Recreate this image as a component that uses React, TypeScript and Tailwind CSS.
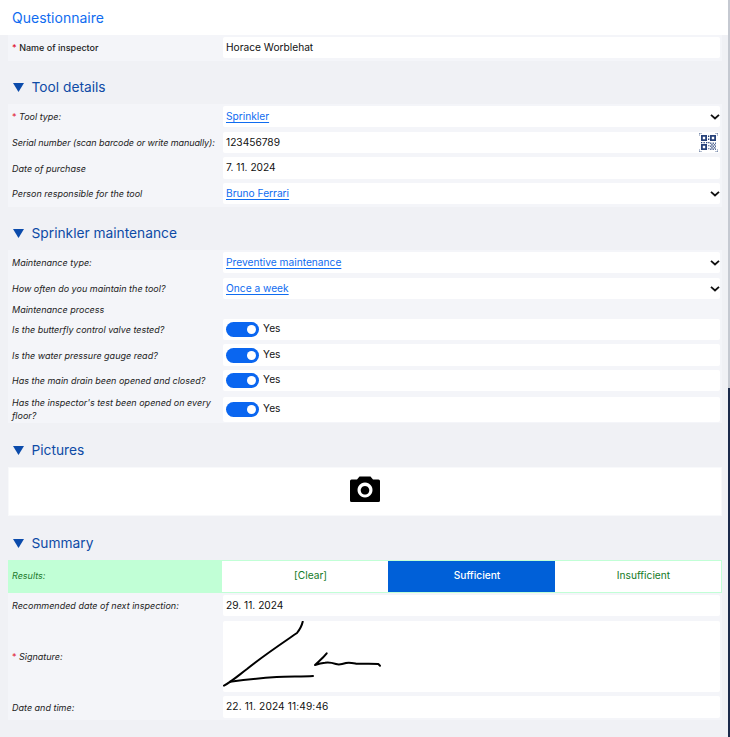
import React from "react";

function Chevron() {
  return (
    <svg width="10" height="7" viewBox="0 0 10 7" className="absolute right-[0.5px] top-1/2 -translate-y-1/2" fill="none" stroke="#111" strokeWidth="1.8">
      <path d="M1 1.3 L5 5 L9 1.3" />
    </svg>
  );
}

function Label({ children, req, plain }: { children: React.ReactNode; req?: boolean; plain?: boolean }) {
  return (
    <div className={`w-[214px] shrink-0 pl-1 text-[9px] leading-[13px] text-[#222] ${plain ? "font-medium" : "italic"}`}>
      {req && <span className="text-[#e0102a] mr-[2.5px] not-italic">*</span>}
      {children}
    </div>
  );
}

function Row({ label, req, plain, h = "h-[21px]", mt = "mt-0", children }: { label: React.ReactNode; req?: boolean; plain?: boolean; h?: string; mt?: string; children?: React.ReactNode }) {
  return (
    <div className={`flex items-center shrink-0 ${mt}`}>
      <Label req={req} plain={plain}>{label}</Label>
      <div className={`relative flex-1 ${h} ml-[0.5px] mr-[2px] bg-white rounded-[2px] flex items-center pl-[3.5px] text-[10.2px] text-[#111]`}>
        {children}
      </div>
    </div>
  );
}

function LinkVal({ children }: { children: React.ReactNode }) {
  return <a className="text-[#0f6cf0] underline underline-offset-[1.5px]">{children}</a>;
}

function Toggle() {
  return (
    <div className="flex items-center">
      <div className="w-[33px] h-[15px] rounded-full bg-[#0a66f0] relative">
        <div className="absolute right-[3px] top-[3px] w-[9px] h-[9px] rounded-full bg-white" />
      </div>
      <span className="ml-1 -mt-[1px]">Yes</span>
    </div>
  );
}

function Heading({ children, h, pt = "pt-[9px]" }: { children: React.ReactNode; h: string; pt?: string }) {
  return (
    <div className={`flex items-center ${h} pl-[4.5px] ${pt}`}>
      <svg width="11" height="9" viewBox="0 0 11 9" className="mr-[8px]">
        <path d="M0 0 H11 L5.5 9 Z" fill="#0b4bab" />
      </svg>
      <span className="text-[13.75px] text-[#0e4ba6]">{children}</span>
    </div>
  );
}

function QrIcon() {
  return (
    <svg width="19" height="19" viewBox="0 0 19 19" className="absolute right-[2px] top-[1px]" fill="#27427a">
      <path d="M0 3V0H3M16 0H19V3M19 16V19H16M3 19H0V16" fill="none" stroke="#27427a" strokeWidth="0.7" />
      <path fillRule="evenodd" d="M2 2H8V8H2ZM3.8 3.8V6.2H6.2V3.8ZM11 2H17V8H11ZM12.8 3.8V6.2H15.2V3.8ZM2 11H8V17H2ZM3.8 12.8V15.2H6.2V12.8Z" />
      <path d="M9 2.5h1.3v1.5H9zM9 5.5h1.3v1.5H9zM2 9h1.3v1.3H2zM4.5 9h1.3v1.3H4.5zM7 9h1.3v1.3H7zM9.2 9h1.3v1.3H9.2z" />
      <path d="M11 9.5h1.5v1.5H11zM13.5 9.5h1.5v1.5h-1.5zM16 9.5h1v1.5h-1zM12.2 11h1.5v1.5h-1.5zM14.8 11h1.5v1.5h-1.5zM11 12.5h1.5v1.5H11zM13.5 12.5h1.5v1.5h-1.5zM16 12.5h1v1.5h-1zM12.2 14h1.5v1.5h-1.5zM14.8 14h1.5v1.5h-1.5zM9.2 12h1.2v1.2H9.2zM9.2 15h1.2v1.2H9.2zM11 15.5h1.5v1.5H11zM13.5 15.5h1.5v1.5h-1.5zM16 15.5h1v1.5h-1z" opacity="0.75" />
    </svg>
  );
}

function Camera() {
  return (
    <svg width="32" height="28" viewBox="0 0 32 28" className="mb-[5px]">
      <path fillRule="evenodd" fill="#000" d="M10.5 1.5 H21.5 L24 4.5 H29.5 Q31 4.5 31 6 V25.5 Q31 27 29.5 27 H2.5 Q1 27 1 25.5 V6 Q1 4.5 2.5 4.5 H8 Z M16 7.5 A7.5 7.5 0 1 0 16.01 7.5 Z M16 11 A4.3 4.3 0 1 1 15.99 11 Z" />
    </svg>
  );
}

function Signature() {
  return (
    <svg width="170" height="71" viewBox="0 0 170 71" className="absolute left-0 top-0" fill="none" stroke="#000" strokeWidth="2" strokeLinecap="round" strokeLinejoin="round">
      <path d="M1 64.6 C 8 61 16 54 24 48 C 40 35 58 23 74 12 C 77 8 79 4 79.7 0.7" />
      <path d="M7 60.7 C 20 59 38 57 53.7 56 C 65 55.5 80 55.5 90 55" />
      <path d="M103.7 32.3 C 100 37 96 40 92 44 C 95 43 99 42 102 41.7 C 106 41 110 42 113 43 C 116 44 120 43 123 42 C 126 41 130 42 133.7 42.7 C 140 43 148 42.5 155.3 43 L 157 44.7" />
    </svg>
  );
}

export default function App() {
  return (
    <div className="w-[730px] h-[737px] overflow-hidden flex bg-[#f0f1f5] font-['Inter',sans-serif]">
      <div className="w-[728px] shrink-0">
        <div className="h-[35px] bg-white flex items-center pl-3 text-[14px] text-[#0f6cf0]">Questionnaire</div>

        <div className="ml-2 w-[714px]">
          <div className="bg-[#f4f5f9] pt-[2px] h-[26px]">
            <Row label="Name of inspector" req plain>Horace Worblehat</Row>
          </div>

          <Heading h="h-[43px]">Tool details</Heading>
          <div className="bg-[#f4f5f9] h-[103px] pt-[2px] flex flex-col">
            <Row label="Tool type:" req><LinkVal>Sprinkler</LinkVal><Chevron /></Row>
            <Row label={<span className="whitespace-nowrap tracking-[-0.08px]">Serial number (scan barcode or write manually):</span>} mt="mt-[5px]">123456789<QrIcon /></Row>
            <Row label="Date of purchase" h="h-[22px]" mt="mt-[4px]">7. 11. 2024</Row>
            <Row label="Person responsible for the tool" mt="mt-[4px]"><LinkVal>Bruno Ferrari</LinkVal><Chevron /></Row>
          </div>

          <Heading h="h-[43px]">Sprinkler maintenance</Heading>
          <div className="bg-[#f4f5f9] h-[173px] pt-[2px] flex flex-col">
            <Row label="Maintenance type:"><LinkVal>Preventive maintenance</LinkVal><Chevron /></Row>
            <Row label="How often do you maintain the tool?" mt="mt-[5px]"><LinkVal>Once a week</LinkVal><Chevron /></Row>
            <div className="h-[20px] flex items-center shrink-0 pt-[1px]"><Label>Maintenance process</Label></div>
            <Row label="Is the butterfly control valve tested?"><Toggle /></Row>
            <Row label="Is the water pressure gauge read?" h="h-[22px]" mt="mt-[4px]"><Toggle /></Row>
            <Row label="Has the main drain been opened and closed?" mt="mt-[4px]"><Toggle /></Row>
            <Row label="Has the inspector's test been opened on every floor?" h="h-[25px]" mt="mt-[5px]"><Toggle /></Row>
          </div>

          <Heading h="h-[44px]" pt="pt-[11px]">Pictures</Heading>
          <div className="bg-white border border-[#f8f9fb] h-[49px] flex items-center justify-center">
            <Camera />
          </div>

          <Heading h="h-[44px]" pt="pt-[11px]">Summary</Heading>
          <div className="bg-[#c1ffd6] h-[33px] flex items-center">
            <div className="w-[214px] shrink-0 pl-1 pb-[1px] text-[9px] italic text-[#1c7a2c]">Results:</div>
            <div className="flex-1 h-[31px] flex mr-[1px] bg-white text-[10.2px] text-[#137a25]">
              <div className="w-[166px] pl-[11px] pb-[1px] flex items-center justify-center">[Clear]</div>
              <div className="w-[167px] pl-[11px] pb-[1px] flex items-center justify-center bg-[#0060d8] text-white font-medium">Sufficient</div>
              <div className="flex-1 pl-[11px] pb-[1px] flex items-center justify-center">Insufficient</div>
            </div>
          </div>
          <div className="bg-[#f4f5f9] h-[127px] pt-[2px] flex flex-col">
            <Row label="Recommended date of next inspection:">29. 11. 2024</Row>
            <Row label="Signature:" req h="h-[71px]" mt="mt-[5px]"><Signature /></Row>
            <Row label="Date and time:" h="h-[22px]" mt="mt-[4px]"><span className="tracking-[0.1px]">22. 11. 2024 11:49:46</span></Row>
          </div>
        </div>
      </div>
      <div className="w-[2px] flex flex-col">
        <div className="h-[388px] bg-[#c5c9d1]" />
        <div className="flex-1 bg-[#1b2a4a]" />
      </div>
    </div>
  );
}
